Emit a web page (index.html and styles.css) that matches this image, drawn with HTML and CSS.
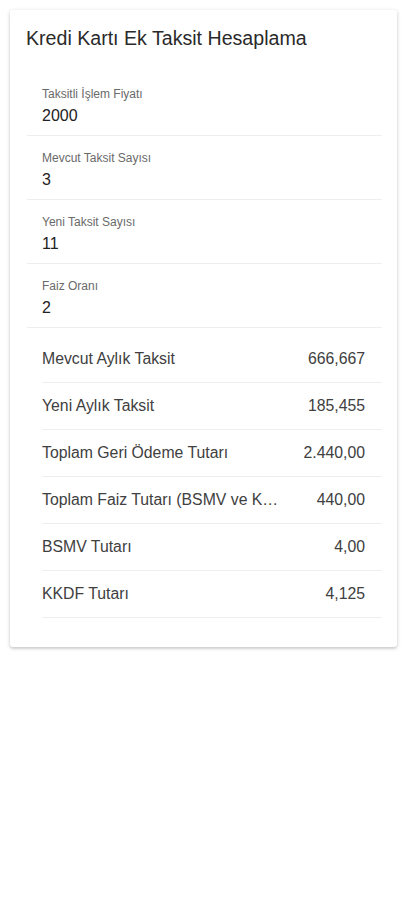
FILE: index.html
```html
<!DOCTYPE html>
<html lang="tr">
<head>
  <meta charset="UTF-8">
  <meta name="viewport" content="width=device-width, initial-scale=1.0">
  <title>Kredi Kartı Ek Taksit Hesaplama</title>
  <link rel="stylesheet" href="styles.css">
</head>
<body>
  <div class="card">
    <h1 class="card-title">Kredi Kartı Ek Taksit Hesaplama</h1>

    <!-- Input fields -->
    <div class="fields">
      <div class="field">
        <label for="price">Taksitli İşlem Fiyatı</label>
        <input id="price" type="text" value="2000">
      </div>
      <div class="field">
        <label for="current">Mevcut Taksit Sayısı</label>
        <input id="current" type="text" value="3">
      </div>
      <div class="field">
        <label for="next">Yeni Taksit Sayısı</label>
        <input id="next" type="text" value="11">
      </div>
      <div class="field">
        <label for="rate">Faiz Oranı</label>
        <input id="rate" type="text" value="2">
      </div>
    </div>

    <!-- Results -->
    <ul class="results">
      <li class="row"><span class="row-label">Mevcut Aylık Taksit</span><span class="row-value">666,667</span></li>
      <li class="row"><span class="row-label">Yeni Aylık Taksit</span><span class="row-value">185,455</span></li>
      <li class="row"><span class="row-label">Toplam Geri Ödeme Tutarı</span><span class="row-value">2.440,00</span></li>
      <li class="row"><span class="row-label">Toplam Faiz Tutarı (BSMV ve KKDF Dahil)</span><span class="row-value">440,00</span></li>
      <li class="row"><span class="row-label">BSMV Tutarı</span><span class="row-value">4,00</span></li>
      <li class="row"><span class="row-label">KKDF Tutarı</span><span class="row-value">4,125</span></li>
    </ul>
  </div>
</body>
</html>
```

FILE: styles.css
```css
body {
  margin: 0;
  padding: 10px;
  background: #fff;
  font-family: "Liberation Sans", Arial, sans-serif;
  color: #222;
}
/* Card holding the whole calculator */
.card {
  width: 387px;
  box-sizing: border-box;
  padding: 17px 15px 29px 17px;
  background: #fff;
  border-radius: 3px;
  box-shadow: 0 1px 4px rgba(0,0,0,0.18), 0 2px 2px rgba(0,0,0,0.08);
}
.card-title {
  margin: 0 0 0 -1px;
  font-size: 19.6px;
  font-weight: normal;
  line-height: 22px;
  color: #2a2a2a;
}
.fields {
  margin-top: 23px;
}
.field {
  display: flex;
  flex-direction: column;
  height: 63px;
  padding-left: 15px;
  border-bottom: 1px solid #eee;
}
.field label {
  margin-top: 15px;
  font-size: 12px;
  line-height: 14px;
  color: #6a6a6a;
}
.field input {
  margin-top: 6px;
  padding: 0;
  border: none;
  outline: none;
  font-family: inherit;
  font-size: 16px;
  line-height: 18px;
  color: #222;
  background: transparent;
}
.results {
  list-style: none;
  margin: 0;
  padding: 8px 0 0 15px;
}
.row {
  display: flex;
  align-items: center;
  gap: 30px;
  height: 46px;
  padding-right: 17px;
  border-bottom: 1px solid #eee;
  font-size: 15.8px;
  color: #404040;
}
.row-label {
  flex: 1;
  min-width: 0;
  white-space: nowrap;
  overflow: hidden;
  text-overflow: ellipsis;
}
.row-value {
  white-space: nowrap;
  color: #404040;
}
```
